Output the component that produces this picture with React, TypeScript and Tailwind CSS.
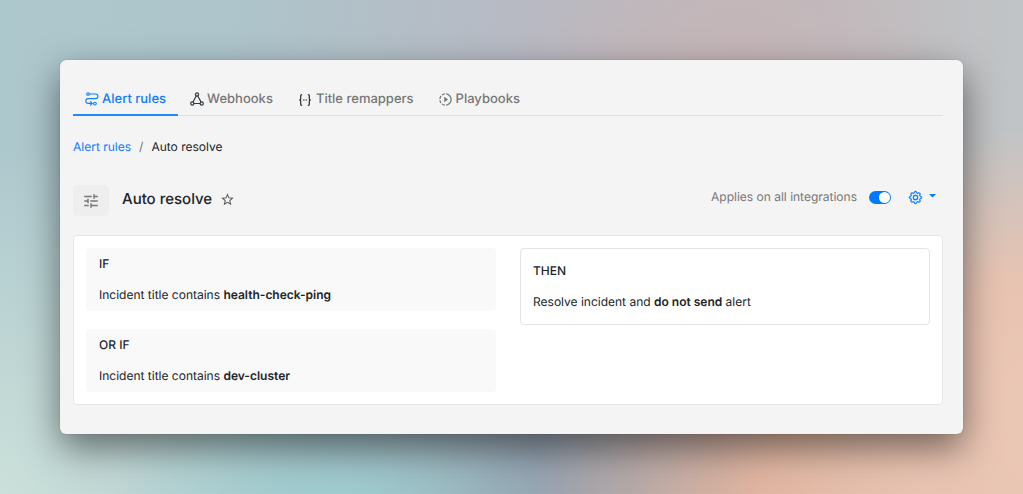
import React, { useState } from "react";
import { MdOutlineSlowMotionVideo, MdStarBorder, MdTune } from "react-icons/md";
import { BsGear } from "react-icons/bs";

function RouteIcon() {
  return (
    <svg className="size-3.5" viewBox="0 0 14 14" fill="none" stroke="currentColor" strokeWidth="1.1" strokeLinecap="round" strokeLinejoin="round" aria-hidden="true">
      <circle cx="3" cy="2" r="1.3" />
      <path d="M4.4 2H10.6a2.2 2.2 0 0 1 0 4.6H3.2a2.4 2.4 0 0 0 0 4.8H6.6" />
      <path d="M5.4 9.6 7.2 11.4 5.4 13.2" />
      <circle cx="9.9" cy="11.6" r="1.4" />
    </svg>
  );
}

function WebhookIcon() {
  return (
    <svg className="size-3.5 text-[#343a40]" viewBox="0 0 14 14" fill="none" stroke="currentColor" strokeWidth="1.2" strokeLinecap="round" aria-hidden="true">
      <circle cx="7" cy="2.5" r="1.6" />
      <circle cx="2.3" cy="11.5" r="1.6" />
      <circle cx="11.7" cy="11.5" r="1.6" />
      <path d="M6.1 4.2 3.1 9.8M7.9 4.2l3 5.6M4.1 11.5h5.8" />
    </svg>
  );
}

function BracesIcon() {
  return (
    <svg className="mt-0.5 h-3.5 w-4" viewBox="0 0 16 14" fill="none" stroke="#343a40" strokeWidth="1.3" aria-hidden="true">
      <path d="M5.2 1.6H4.9Q3.7 1.6 3.7 2.8V5.4Q3.7 7 2.3 7 3.7 7 3.7 8.6V11.2Q3.7 12.4 4.9 12.4H5.2" />
      <path d="M10.8 1.6H11.1Q12.3 1.6 12.3 2.8V5.4Q12.3 7 13.7 7 12.3 7 12.3 8.6V11.2Q12.3 12.4 11.1 12.4H10.8" />
      <path d="M5.8 7H7.6M8.4 7H10.2" strokeWidth="1" />
    </svg>
  );
}

const tabs = [
  { label: "Alert rules", icon: <RouteIcon /> },
  { label: "Webhooks", icon: <WebhookIcon /> },
  { label: "Title remappers", icon: <BracesIcon /> },
  { label: "Playbooks", icon: <MdOutlineSlowMotionVideo className="size-[15px]" /> },
];

function Condition({ keyword, value }: { keyword: string; value: string }) {
  return (
    <div className="flex flex-col gap-[11px] rounded bg-[#f9f9f9] px-[13px] py-1.5">
      <div className="font-medium">{keyword}</div>
      <p>
        Incident title contains <strong className="font-semibold">{value}</strong>
      </p>
    </div>
  );
}

export default function App() {
  const [enabled, setEnabled] = useState(true);

  return (
    <div className="min-h-screen bg-[radial-gradient(ellipse_22%_32%_at_72%_14%,#c5b5b7_0%,#c5b5b700_100%),radial-gradient(ellipse_22%_30%_at_33%_104%,#9dd0d2_0%,#9dd0d200_100%),radial-gradient(ellipse_32%_70%_at_0%_100%,#cbe0da_0%,#cbe0da00_100%),radial-gradient(ellipse_35%_60%_at_105%_85%,#ecc8b7_0%,#e8c3b1_50%,#d0b0a300_100%),radial-gradient(ellipse_32%_50%_at_84%_100%,#dfb5a0_0%,#dfb29d_30%,#dfae9800_100%),radial-gradient(ellipse_34%_50%_at_55%_100%,#95a2b0_0%,#95a2b0_20%,#95a2b000_100%),linear-gradient(90deg,#adc8cd_0%,#adc5cb_22%,#b8b9c3_52%,#c0b9bd_75%,#c0c4c6_100%)] p-[60px] font-['Inter',sans-serif] text-xs leading-5 text-[#212529] [text-rendering:geometricPrecision]">
      <main className="rounded-md bg-[#f4f4f4] pt-[29px] pr-5 pb-[29px] pl-[13px] shadow-[0_0_1px_rgba(0,0,0,0.4),0_14px_36px_rgba(0,0,0,0.5)]">
        <nav className="flex border-b border-[#dee2e6] text-[13px] leading-5 font-medium" aria-label="Sections">
          {tabs.map((tab, i) => (
            <a
              key={tab.label}
              href="#"
              aria-current={i === 0 ? "page" : undefined}
              className={
                i === 0
                  ? "-mb-px flex items-center gap-[3px] border-b-2 border-[#2288fb] px-3 pb-[5px] text-[#0d7dff]"
                  : "-mb-px flex items-center gap-[3px] border-b-2 border-transparent px-3 pb-[5px] text-[#777777]"
              }
            >
              {tab.icon}
              {tab.label}
            </a>
          ))}
        </nav>

        <nav className="mt-[21px] flex gap-2" aria-label="Breadcrumb">
          <a href="#" className="text-[#0d7dff]">Alert rules</a>
          <span className="text-[#6c757d]">/</span>
          <span>Auto resolve</span>
        </nav>

        <header className="mt-7 flex items-start justify-between">
          <div className="flex items-start">
            <div className="flex h-[31px] w-9 items-center justify-center rounded bg-[#eeeeee]">
              <MdTune className="size-[18px] text-[#777777]" />
            </div>
            <h1 className="ml-[13px] text-[15px] leading-7 font-medium">Auto resolve</h1>
            <button type="button" aria-label="Add to favorites" className="ml-2 flex h-7 items-center text-[#555555]">
              <MdStarBorder className="size-[15px]" />
            </button>
          </div>
          <div className="flex h-6 items-center">
            <label htmlFor="integrations" className="text-[#777777]">Applies on all integrations</label>
            <span className="ml-3 flex h-[13px] w-[22px] items-center rounded-full bg-[#007bff] has-[:checked]:justify-end">
              <input
                id="integrations"
                type="checkbox"
                role="switch"
                checked={enabled}
                onChange={(e) => setEnabled(e.target.checked)}
                className="mx-px size-[11px] cursor-pointer appearance-none rounded-full bg-white"
              />
            </span>
            <button type="button" aria-label="Rule settings" className="mr-[7px] ml-[18px] flex items-center gap-[7px] text-[#007bff]">
              <BsGear className="size-[13px] overflow-visible stroke-current stroke-[0.5]" />
              <svg className="mb-0.5 h-1 w-[7px]" viewBox="0 0 7 4" fill="currentColor" aria-hidden="true">
                <path d="M0 0h7L3.5 3.6z" />
              </svg>
            </button>
          </div>
        </header>

        <section className="mt-[19px] grid grid-cols-2 items-start gap-6 rounded border border-[#e4e6e8] bg-white p-3">
          <div className="flex flex-col gap-[18px]">
            <Condition keyword="IF" value="health-check-ping" />
            <Condition keyword="OR IF" value="dev-cluster" />
          </div>
          <div className="flex flex-col gap-[11px] rounded border border-[#e2e4e6] p-3">
            <div className="font-medium">THEN</div>
            <p>
              Resolve incident and <strong className="font-semibold">do not send</strong> alert
            </p>
          </div>
        </section>
      </main>
    </div>
  );
}
